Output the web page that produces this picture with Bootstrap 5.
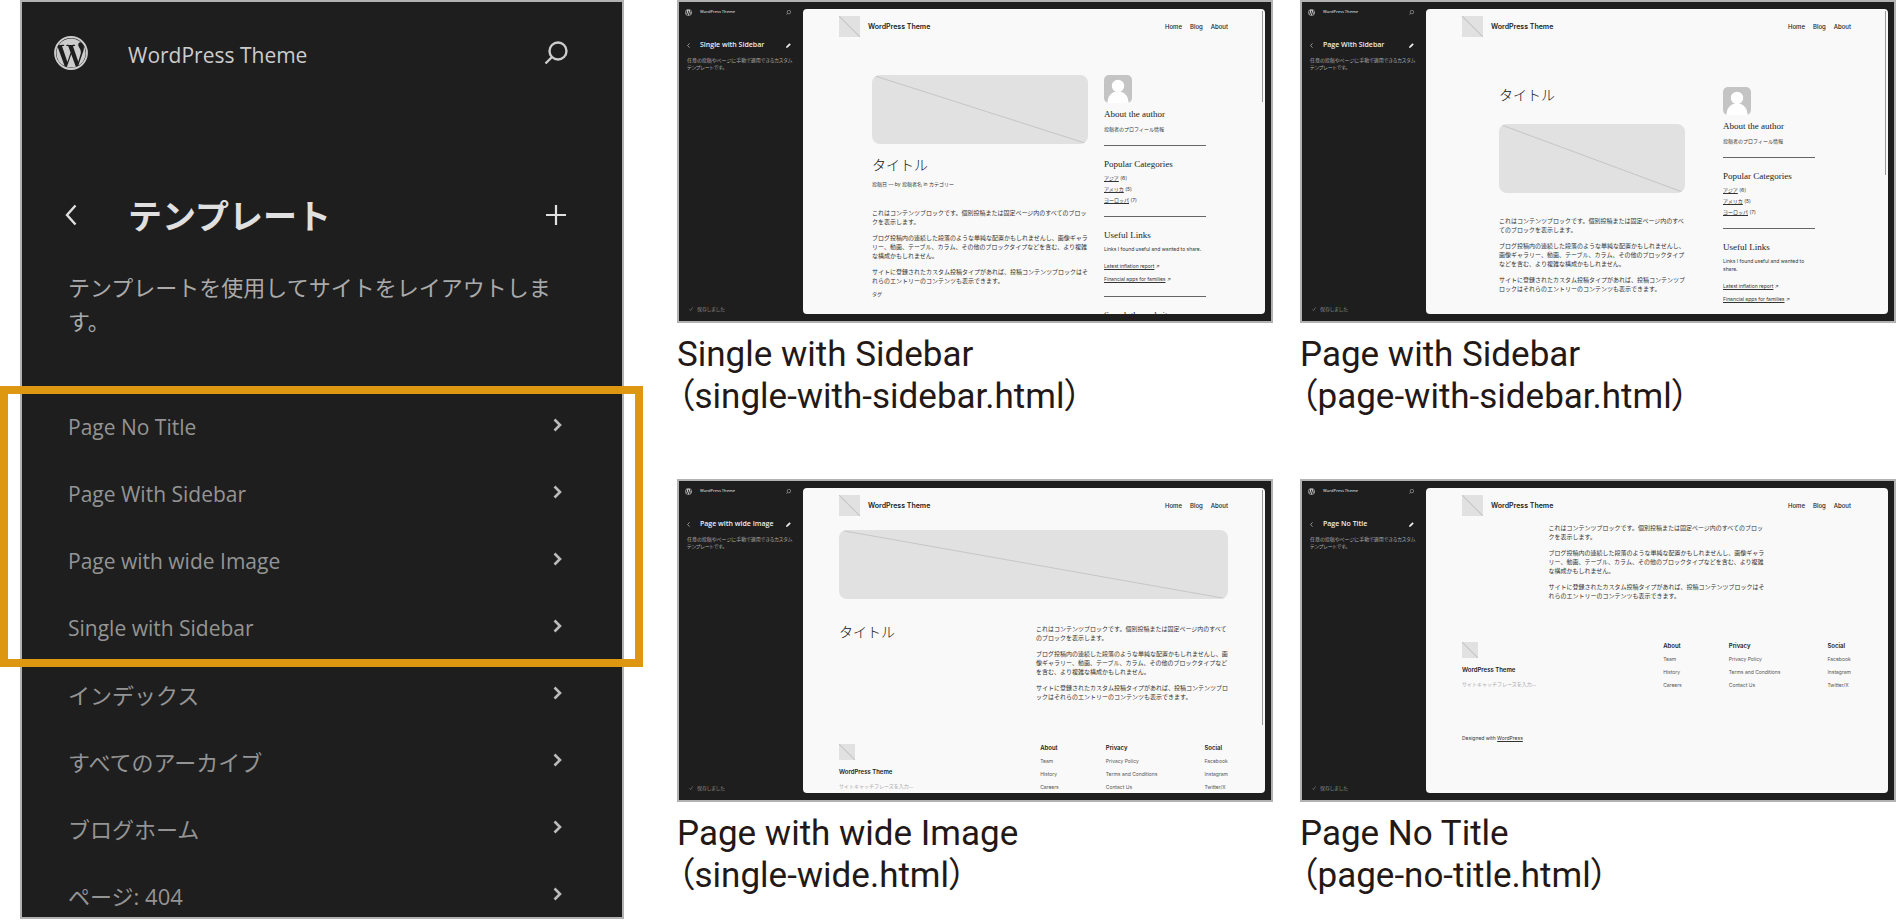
<!DOCTYPE html>
<html lang="ja">
<head>
<meta charset="utf-8">
<meta name="viewport" content="width=device-width, initial-scale=1">
<title>テンプレート</title>
<link href="https://cdn.jsdelivr.net/npm/bootstrap@5.3.0/dist/css/bootstrap.min.css" rel="stylesheet">
<style>
  body { background: #fff; color: #231815; font-family: "Open Sans", "Noto Sans CJK JP", sans-serif; line-break: normal; }
  a { color: inherit; text-decoration: none; }
  svg { display: block; flex: none; }
  .board { padding: 0 1px 0 20px; gap: 53px; }

  /* Template list panel */
  .panel { flex: 604 1 604px; min-width: 0; background: #1e1e1e; border: 2px solid #b2b2b2; color: #949494; font-size: 22px; line-height: 34px; }
  .panel-bar { padding: 0 54px 0 32px; gap: 40px; }
  .panel-top { margin-top: 34px; height: 34px; color: #ccc; font-size: 21px; }
  .panel-top span { padding-top: 4px; }
  .panel-title { margin-top: 120px; height: 50px; color: #e0e0e0; }
  .panel-title h1 { margin: 0; font-size: 34px; font-weight: 700; line-height: 50px; font-family: "Noto Sans CJK JP", sans-serif; }
  .panel button { background: none; border: 0; padding: 0; color: inherit; }
  .panel .slot { width: 34px; display: flex; justify-content: center; }
  .panel-note { margin: 30px 0 55px; padding: 0 60px 0 46px; color: #aaa; }
  .panel-row { display: flex; justify-content: space-between; align-items: center; padding: 17px 60px 16px 46px; }
  .panel-row.en { font-size: 21px; }
  .panel-row svg { color: #bbb; margin-bottom: 4px; }
  .panel-list .panel-row:last-child { padding-bottom: 4px; }
  .marked { position: relative; }
  .marked::after { content: ""; position: absolute; inset: -7px -21px -6px -22px; border: 8px solid #de9710; pointer-events: none; }

  /* Gallery */
  .gallery { flex: 1219 1 1219px; min-width: 0; display: grid; grid-template-columns: 1fr 1fr; column-gap: 27px; row-gap: 61px; align-content: start; }
  .gallery figure { margin: 0; min-width: 0; }
  .gallery figcaption { margin-top: 11px; font: 400 35px/42px Roboto, "Noto Sans CJK JP", sans-serif; font-feature-settings: "palt"; }
  .shot { aspect-ratio: 596 / 323; overflow: hidden; display: flex; background: #1e1e1e; border: 2px solid #b2b2b2; padding: 7px 6px 7px 0; font-size: 5px; line-height: 8px; }

  /* Editor side bar inside a shot */
  .side { flex: none; width: 124px; margin: -7px 0; padding: 6px 12px 8px 6px; display: flex; flex-direction: column; color: #aaa; font-feature-settings: "palt"; }
  .side-bar { display: flex; align-items: center; gap: 8px; height: 8px; font-size: 4px; font-weight: 600; color: #ccc; }
  .side-title { height: 10px; margin-top: 24px; font-size: 7px; line-height: 10px; color: #eee; }
  .side .slot { width: 7px; display: flex; justify-content: center; }
  .side p { margin: 7px 0 0 2px; line-height: 7px; white-space: nowrap; }
  .side .saved { display: flex; align-items: center; gap: 4px; margin: auto 0 0 4px; color: #8a8a8a; }

  /* Site canvas inside a shot */
  .canvas { position: relative; flex: 1; min-width: 0; overflow: hidden; border-radius: 4px; background: #f9f9f9; color: #333; font-family: Inter, "Noto Sans CJK JP", sans-serif; padding: 7px 37px 0 36px; }
  .canvas::after { content: ""; position: absolute; top: 2px; right: 2px; width: 1px; height: var(--bar, 0); background: #999; }
  .site-head { display: flex; align-items: center; height: 21px; gap: 8px; color: #222; }
  .site-head strong { font-size: 7px; font-weight: 600; }
  .site-head nav { display: flex; gap: 8px; margin-left: auto; font-size: 6px; font-weight: 500; }
  .blank { background: #e1e1e1 linear-gradient(to top right, transparent calc(50% - 1px), #c6c6c6 50%, transparent calc(50% + 1px)); }
  .hero { height: 69px; border-radius: 8px; }
  .logo-lg { width: 21px; height: 21px; }
  .logo-sm { width: 16px; height: 16px; }
  .canvas h2 { margin: 0; font: 300 14px/14px "Noto Sans CJK JP", sans-serif; color: #111; }
  .prose { display: flex; flex-direction: column; gap: 7px; font-size: 6px; line-height: 9px; text-spacing-trim: space-all; }
  .prose p { margin: 0; }
  .duo { display: flex; }
  .duo.single { margin: 38px 22px 0 33px; gap: 16px; }
  .duo.paged { margin: 50px 36px 0 37px; gap: 38px; }
  .duo article { flex: 1; min-width: 0; }
  .duo.single aside { width: 102px; }
  .duo.paged aside { width: 92px; }
  .canvas h3 { margin: 0; font: 400 9px/12px "Liberation Serif", serif; color: #222; }
  .canvas h3.author { margin: 5px 0; }
  .canvas hr { margin: 12px 0; border: 0; border-top: 1px solid #666; opacity: 1; }
  .canvas ul { list-style: none; margin: 0; padding: 0; }
  .canvas aside p { margin: 0; }
  .canvas .cats { margin: 3px 0 10px; line-height: 11px; }
  .canvas .cats + hr { margin-top: 0; }
  .canvas aside .link-a { margin-top: 9px; }
  .canvas aside .link-b { margin: 5px 0 13px; }
  .under { text-decoration: underline; }
  .foot { display: flex; justify-content: space-between; }
  .foot .brand strong { display: block; margin-top: 8px; font-size: 6px; font-weight: 600; color: #222; }
  .foot .brand span { display: block; margin-top: 6px; line-height: 9px; color: #aaa; }
  .foot nav { display: flex; gap: 47px; }
  .foot nav b { display: block; font-size: 6px; font-weight: 600; margin-bottom: 3px; color: #222; }
  .foot nav li { line-height: 13px; color: #555; }
</style>
</head>
<body>
<svg width="0" height="0" class="position-absolute" aria-hidden="true">
  <symbol id="wp" viewBox="0 0 16 16"><g fill="currentColor"><path d="M12.633 7.653c0-.848-.305-1.435-.566-1.892l-.08-.13c-.317-.51-.594-.958-.594-1.48 0-.63.478-1.218 1.152-1.218q.03 0 .058.003l.031.003A6.84 6.84 0 0 0 8 1.137 6.86 6.86 0 0 0 2.266 4.23c.16.005.313.009.442.009.717 0 1.828-.087 1.828-.087.37-.022.414.521.044.565 0 0-.371.044-.785.065l2.5 7.434 1.5-4.506-1.07-2.929c-.369-.022-.719-.065-.719-.065-.37-.022-.326-.588.043-.566 0 0 1.134.087 1.808.087.718 0 1.83-.087 1.83-.087.37-.022.413.522.043.566 0 0-.372.043-.785.065l2.48 7.377.684-2.287.054-.173c.27-.86.469-1.495.469-2.046zM1.137 8a6.86 6.86 0 0 0 3.868 6.176L1.73 5.206A6.8 6.8 0 0 0 1.137 8"/><path d="M6.061 14.583 8.121 8.6l2.109 5.78q.02.05.049.094a6.85 6.85 0 0 1-4.218.109m7.96-9.876q.046.328.047.706c0 .696-.13 1.479-.522 2.458l-2.096 6.06a6.86 6.86 0 0 0 2.572-9.224z"/></g><circle cx="8" cy="8" r="7.5" fill="none" stroke="currentColor" stroke-width=".9"/></symbol>
  <symbol id="search" viewBox="0 0 24 24"><path d="M14 1.500a8.500 8.500 0 1 0 0 17 8.500 8.500 0 0 0 0-17M8 16l-6.500 6.500" fill="none" stroke="currentColor" stroke-width="2.400"/></symbol>
  <symbol id="back" viewBox="0 0 12 22"><path d="M10.500 1.500 2 11l8.500 9.500" fill="none" stroke="currentColor" stroke-width="2.400"/></symbol>
  <symbol id="next" viewBox="0 0 9 14"><path d="M1.500 1.500 7 7l-5.500 5.500" fill="none" stroke="currentColor" stroke-width="2.600"/></symbol>
  <symbol id="plus" viewBox="0 0 20 20"><path d="M10 0v20M0 10h20" stroke="currentColor" stroke-width="2.200"/></symbol>
  <symbol id="pen" viewBox="0 0 10 10"><path d="M0 10 1 6.500 7 .5 9.500 3 3.500 9z" fill="currentColor"/></symbol>
  <symbol id="check" viewBox="0 0 10 10"><path d="M1 6l3 3 5-8" fill="none" stroke="currentColor" stroke-width="1.500"/></symbol>
  <symbol id="face" viewBox="0 0 28 28"><rect width="28" height="28" rx="5" fill="#c4c4c4"/><circle cx="14" cy="11" r="6.200" fill="#fff"/><path d="M3.500 28c0-7 4-11.500 10.500-11.500S24.500 21 24.500 28z" fill="#fff"/></symbol>
</svg>

<main class="board d-flex align-items-start">
  <section class="panel">
    <div class="panel-bar panel-top d-flex align-items-center">
      <svg width="34" height="34"><use href="#wp"/></svg>
      <span>WordPress Theme</span>
      <button type="button" class="ms-auto" aria-label="検索"><svg width="24" height="24"><use href="#search"/></svg></button>
    </div>
    <div class="panel-bar panel-title d-flex align-items-center">
      <button type="button" class="slot" aria-label="戻る"><svg width="12" height="22"><use href="#back"/></svg></button>
      <h1>テンプレート</h1>
      <button type="button" class="ms-auto" aria-label="追加"><svg width="24" height="20"><use href="#plus"/></svg></button>
    </div>
    <p class="panel-note">テンプレートを使用してサイトをレイアウトします。</p>
    <nav class="panel-list">
      <div class="marked">
        <a class="panel-row en" href="#">Page No Title<svg width="9" height="14"><use href="#next"/></svg></a>
        <a class="panel-row en" href="#">Page With Sidebar<svg width="9" height="14"><use href="#next"/></svg></a>
        <a class="panel-row en" href="#">Page with wide Image<svg width="9" height="14"><use href="#next"/></svg></a>
        <a class="panel-row en pb-3" href="#">Single with Sidebar<svg width="9" height="14"><use href="#next"/></svg></a>
      </div>
      <a class="panel-row" href="#">インデックス<svg width="9" height="14"><use href="#next"/></svg></a>
      <a class="panel-row" href="#">すべてのアーカイブ<svg width="9" height="14"><use href="#next"/></svg></a>
      <a class="panel-row" href="#">ブログホーム<svg width="9" height="14"><use href="#next"/></svg></a>
      <a class="panel-row" href="#">ページ: 404<svg width="9" height="14"><use href="#next"/></svg></a>
    </nav>
  </section>

  <section class="gallery">
    <figure>
      <div class="shot">
        <div class="side">
          <div class="side-bar"><svg width="7" height="7"><use href="#wp"/></svg><span>WordPress Theme</span><svg class="ms-auto" width="5" height="5"><use href="#search"/></svg></div>
          <div class="side-bar side-title"><span class="slot"><svg width="3" height="5"><use href="#back"/></svg></span><span>Single with Sidebar</span><svg class="ms-auto" width="5" height="5"><use href="#pen"/></svg></div>
          <p>任意の投稿やページに手動で適用できるカスタム<br>テンプレートです。</p>
          <div class="saved"><svg width="4" height="4"><use href="#check"/></svg>保存しました</div>
        </div>
        <div class="canvas" style="--bar: 91px">
          <header class="site-head"><span class="blank logo-lg"></span><strong>WordPress Theme</strong><nav><a href="#">Home</a><a href="#">Blog</a><a href="#">About</a></nav></header>
          <div class="duo single">
            <article>
              <div class="blank hero"></div>
              <h2 style="margin-top: 13px">タイトル</h2>
              <div style="margin: 9px 0 20px">投稿日 — by 投稿者名 in カテゴリー</div>
              <div class="prose">
                <p>これはコンテンツブロックです。個別投稿または固定ページ内のすべてのブロックを表示します。</p>
                <p>ブログ投稿内の連続した段落のような単純な配置かもしれませんし、画像ギャラリー、動画、テーブル、カラム、その他のブロックタイプなどを含む、より複雑な構成かもしれません。</p>
                <p>サイトに登録されたカスタム投稿タイプがあれば、投稿コンテンツブロックはそれらのエントリーのコンテンツも表示できます。</p>
              </div>
              <div style="margin-top: 5px">タグ</div>
            </article>
            <aside>
              <svg width="28" height="28"><use href="#face"/></svg>
              <h3 class="author">About the author</h3>
              <p>投稿者のプロフィール情報</p>
              <hr>
              <h3>Popular Categories</h3>
              <ul class="cats"><li><a class="under" href="#">アジア</a> (6)</li><li><a class="under" href="#">アメリカ</a> (5)</li><li><a class="under" href="#">ヨーロッパ</a> (7)</li></ul>
              <hr>
              <h3 class="mb-1">Useful Links</h3>
              <p>Links I found useful and wanted to share.</p>
              <p class="link-a"><a class="under" href="#">Latest inflation report</a> ↗</p>
              <p class="link-b"><a class="under" href="#">Financial apps for families</a> ↗</p>
              <hr>
              <h3>Search the website</h3>
            </aside>
          </div>
        </div>
      </div>
      <figcaption>Single with Sidebar<br>（single-with-sidebar.html）</figcaption>
    </figure>

    <figure>
      <div class="shot">
        <div class="side">
          <div class="side-bar"><svg width="7" height="7"><use href="#wp"/></svg><span>WordPress Theme</span><svg class="ms-auto" width="5" height="5"><use href="#search"/></svg></div>
          <div class="side-bar side-title"><span class="slot"><svg width="3" height="5"><use href="#back"/></svg></span><span>Page With Sidebar</span><svg class="ms-auto" width="5" height="5"><use href="#pen"/></svg></div>
          <p>任意の投稿やページに手動で適用できるカスタム<br>テンプレートです。</p>
          <div class="saved"><svg width="4" height="4"><use href="#check"/></svg>保存しました</div>
        </div>
        <div class="canvas" style="--bar: 164px">
          <header class="site-head"><span class="blank logo-lg"></span><strong>WordPress Theme</strong><nav><a href="#">Home</a><a href="#">Blog</a><a href="#">About</a></nav></header>
          <div class="duo paged">
            <article>
              <h2>タイトル</h2>
              <div class="blank hero" style="margin: 23px 0"></div>
              <div class="prose">
                <p>これはコンテンツブロックです。個別投稿または固定ページ内のすべてのブロックを表示します。</p>
                <p>ブログ投稿内の連続した段落のような単純な配置かもしれませんし、画像ギャラリー、動画、テーブル、カラム、その他のブロックタイプなどを含む、より複雑な構成かもしれません。</p>
                <p>サイトに登録されたカスタム投稿タイプがあれば、投稿コンテンツブロックはそれらのエントリーのコンテンツも表示できます。</p>
              </div>
            </article>
            <aside>
              <svg width="28" height="28"><use href="#face"/></svg>
              <h3 class="author">About the author</h3>
              <p>投稿者のプロフィール情報</p>
              <hr>
              <h3>Popular Categories</h3>
              <ul class="cats"><li><a class="under" href="#">アジア</a> (6)</li><li><a class="under" href="#">アメリカ</a> (5)</li><li><a class="under" href="#">ヨーロッパ</a> (7)</li></ul>
              <hr>
              <h3 class="mb-1">Useful Links</h3>
              <p>Links I found useful and wanted to share.</p>
              <p class="link-a"><a class="under" href="#">Latest inflation report</a> ↗</p>
              <p class="link-b"><a class="under" href="#">Financial apps for families</a> ↗</p>
            </aside>
          </div>
        </div>
      </div>
      <figcaption>Page with Sidebar<br>（page-with-sidebar.html）</figcaption>
    </figure>

    <figure>
      <div class="shot">
        <div class="side">
          <div class="side-bar"><svg width="7" height="7"><use href="#wp"/></svg><span>WordPress Theme</span><svg class="ms-auto" width="5" height="5"><use href="#search"/></svg></div>
          <div class="side-bar side-title"><span class="slot"><svg width="3" height="5"><use href="#back"/></svg></span><span>Page with wide Image</span><svg class="ms-auto" width="5" height="5"><use href="#pen"/></svg></div>
          <p>任意の投稿やページに手動で適用できるカスタム<br>テンプレートです。</p>
          <div class="saved"><svg width="4" height="4"><use href="#check"/></svg>保存しました</div>
        </div>
        <div class="canvas" style="--bar: 235px">
          <header class="site-head"><span class="blank logo-lg"></span><strong>WordPress Theme</strong><nav><a href="#">Home</a><a href="#">Blog</a><a href="#">About</a></nav></header>
          <div class="blank hero" style="margin: 14px 0 25px"></div>
          <div class="d-flex justify-content-between">
            <h2>タイトル</h2>
            <div class="prose" style="width: 192px">
              <p>これはコンテンツブロックです。個別投稿または固定ページ内のすべてのブロックを表示します。</p>
              <p>ブログ投稿内の連続した段落のような単純な配置かもしれませんし、画像ギャラリー、動画、テーブル、カラム、その他のブロックタイプなどを含む、より複雑な構成かもしれません。</p>
              <p>サイトに登録されたカスタム投稿タイプがあれば、投稿コンテンツブロックはそれらのエントリーのコンテンツも表示できます。</p>
            </div>
          </div>
          <footer class="foot" style="margin-top: 43px">
            <div class="brand"><div class="blank logo-sm"></div><strong>WordPress Theme</strong><span>サイトキャッチフレーズを入力…</span></div>
            <nav>
              <div><b>About</b><ul><li><a href="#">Team</a></li><li><a href="#">History</a></li><li><a href="#">Careers</a></li></ul></div>
              <div><b>Privacy</b><ul><li><a href="#">Privacy Policy</a></li><li><a href="#">Terms and Conditions</a></li><li><a href="#">Contact Us</a></li></ul></div>
              <div><b>Social</b><ul><li><a href="#">Facebook</a></li><li><a href="#">Instagram</a></li><li><a href="#">Twitter/X</a></li></ul></div>
            </nav>
          </footer>
        </div>
      </div>
      <figcaption>Page with wide Image<br>（single-wide.html）</figcaption>
    </figure>

    <figure>
      <div class="shot">
        <div class="side">
          <div class="side-bar"><svg width="7" height="7"><use href="#wp"/></svg><span>WordPress Theme</span><svg class="ms-auto" width="5" height="5"><use href="#search"/></svg></div>
          <div class="side-bar side-title"><span class="slot"><svg width="3" height="5"><use href="#back"/></svg></span><span>Page No Title</span><svg class="ms-auto" width="5" height="5"><use href="#pen"/></svg></div>
          <p>任意の投稿やページに手動で適用できるカスタム<br>テンプレートです。</p>
          <div class="saved"><svg width="4" height="4"><use href="#check"/></svg>保存しました</div>
        </div>
        <div class="canvas">
          <header class="site-head"><span class="blank logo-lg"></span><strong>WordPress Theme</strong><nav><a href="#">Home</a><a href="#">Blog</a><a href="#">About</a></nav></header>
          <div class="prose mx-auto" style="width: 216px; margin-top: 7px">
            <p>これはコンテンツブロックです。個別投稿または固定ページ内のすべてのブロックを表示します。</p>
            <p>ブログ投稿内の連続した段落のような単純な配置かもしれませんし、画像ギャラリー、動画、テーブル、カラム、その他のブロックタイプなどを含む、より複雑な構成かもしれません。</p>
            <p>サイトに登録されたカスタム投稿タイプがあれば、投稿コンテンツブロックはそれらのエントリーのコンテンツも表示できます。</p>
          </div>
          <footer style="margin-top: 42px">
            <div class="foot">
              <div class="brand"><div class="blank logo-sm"></div><strong>WordPress Theme</strong><span>サイトキャッチフレーズを入力…</span></div>
              <nav>
                <div><b>About</b><ul><li><a href="#">Team</a></li><li><a href="#">History</a></li><li><a href="#">Careers</a></li></ul></div>
                <div><b>Privacy</b><ul><li><a href="#">Privacy Policy</a></li><li><a href="#">Terms and Conditions</a></li><li><a href="#">Contact Us</a></li></ul></div>
                <div><b>Social</b><ul><li><a href="#">Facebook</a></li><li><a href="#">Instagram</a></li><li><a href="#">Twitter/X</a></li></ul></div>
              </nav>
            </div>
            <div style="margin-top: 42px">Designed with <a class="under" href="#">WordPress</a></div>
          </footer>
        </div>
      </div>
      <figcaption>Page No Title<br>（page-no-title.html）</figcaption>
    </figure>
  </section>
</main>
<script src="https://cdn.jsdelivr.net/npm/bootstrap@5.3.0/dist/js/bootstrap.bundle.min.js"></script>
</body>
</html>
